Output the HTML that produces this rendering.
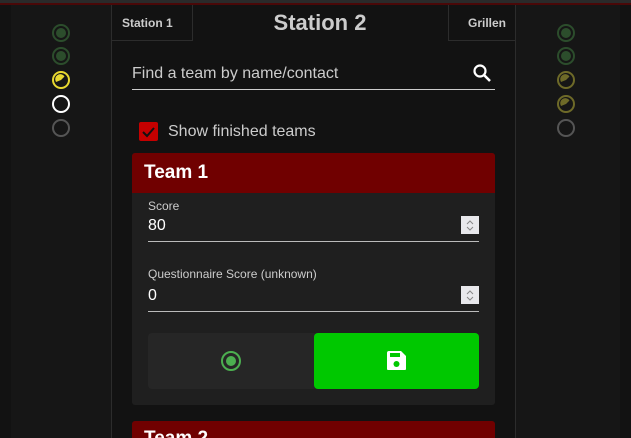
<!DOCTYPE html>
<html style="width:631px;height:438px;overflow:hidden"><head><style>
*{margin:0;padding:0;box-sizing:border-box}
body{width:631px;height:438px;overflow:hidden;background:#121212;font-family:"Liberation Sans",Roboto,sans-serif;position:relative;color:#ddd}
.a{position:absolute}
.side{background:#161616;top:0;height:438px}
svg{position:absolute}
</style></head><body>
<div class="a side" style="left:11px;width:100px"></div>
<div class="a side" style="left:516px;width:104px"></div>
<div class="a" style="left:111px;top:0;width:1px;height:438px;background:#2c2c2c"></div>
<div class="a" style="left:515px;top:0;width:1px;height:438px;background:#2c2c2c"></div>
<div class="a" style="left:0;top:0;width:631px;height:3px;background:#2a2a2a"></div>
<div class="a" style="left:0;top:3px;width:631px;height:2px;background:#4a0808"></div>

<svg style="left:50px;top:22px" width="24" height="120" viewBox="0 0 24 120">
<circle cx="11" cy="11" r="8" fill="none" stroke="#2c4d2c" stroke-width="2"/><circle cx="11" cy="11" r="5" fill="#2c4d2c"/>
<circle cx="11" cy="34" r="8" fill="none" stroke="#2c4d2c" stroke-width="2"/><circle cx="11" cy="34" r="5" fill="#2c4d2c"/>
<circle cx="11" cy="58" r="8" fill="none" stroke="#e8d830" stroke-width="2"/><path d="M11 58 L6 60 A5 5 0 0 1 14.5 54.5 Z" fill="#e8d830"/>
<circle cx="11" cy="82" r="8" fill="none" stroke="#fff" stroke-width="2"/>
<circle cx="11" cy="106" r="8" fill="none" stroke="#555" stroke-width="2"/>
</svg>
<svg style="left:555px;top:22px" width="24" height="120" viewBox="0 0 24 120">
<circle cx="11" cy="11" r="8" fill="none" stroke="#2c4d2c" stroke-width="2"/><circle cx="11" cy="11" r="5" fill="#2c4d2c"/>
<circle cx="11" cy="34" r="8" fill="none" stroke="#2c4d2c" stroke-width="2"/><circle cx="11" cy="34" r="5" fill="#2c4d2c"/>
<circle cx="11" cy="58" r="8" fill="none" stroke="#6e6a28" stroke-width="2"/><path d="M11 58 L6 60 A5 5 0 0 1 14.5 54.5 Z" fill="#6e6a28"/>
<circle cx="11" cy="82" r="8" fill="none" stroke="#6e6a28" stroke-width="2"/><path d="M11 82 L6 84 A5 5 0 0 1 14.5 78.5 Z" fill="#6e6a28"/>
<circle cx="11" cy="106" r="8" fill="none" stroke="#555" stroke-width="2"/>
</svg>

<div class="a" style="left:111px;top:5px;width:82px;height:36px;border:1px solid #2c2c2c;border-top:none;font-weight:bold;font-size:12px;color:#ccc;line-height:36px;padding-left:10px">Station 1</div>
<div class="a" style="left:448px;top:5px;width:68px;height:36px;border:1px solid #2c2c2c;border-top:none;font-weight:bold;font-size:12px;color:#ccc;line-height:36px;text-align:right;padding-right:9px">Grillen</div>
<div class="a" style="left:200px;top:10px;width:240px;text-align:center;font-weight:bold;font-size:22px;color:#ccc">Station 2</div>

<div class="a" style="left:132px;top:65px;font-size:16px;color:#ccc">Find a team by name/contact</div>
<svg style="left:472px;top:63px" width="20" height="20" viewBox="0 0 20 20"><circle cx="8" cy="8" r="5.5" fill="none" stroke="#fff" stroke-width="2.2"/><path d="M12 12 L18 18" stroke="#fff" stroke-width="2.6"/></svg>
<div class="a" style="left:132px;top:89px;width:363px;height:1px;background:#ccc"></div>

<div class="a" style="left:139px;top:122px;width:19px;height:19px;background:#c40000;border-radius:2px"></div>
<svg style="left:139px;top:122px" width="19" height="19"><path d="M4 10 L8 14 L15 6" stroke="#111" stroke-width="2" fill="none"/></svg>
<div class="a" style="left:168px;top:123px;font-size:16px;color:#ccc">Show finished teams</div>

<div class="a" style="left:132px;top:153px;width:363px;height:252px;background:#1f1f1f;border-radius:3px;overflow:hidden">
<div style="height:40px;background:#700000;color:#fff;font-weight:bold;font-size:19px;line-height:40px;padding-left:12px">Team 1</div>
</div>
<div class="a" style="left:148px;top:199px;font-size:12px;color:#ccc">Score</div>
<div class="a" style="left:148px;top:217px;font-size:16px;color:#fff">80</div>
<div class="a" style="left:148px;top:241px;width:331px;height:1px;background:#bbb"></div>
<div class="a" style="left:148px;top:267px;font-size:12px;color:#ccc">Questionnaire Score (unknown)</div>
<div class="a" style="left:148px;top:287px;font-size:16px;color:#fff">0</div>
<div class="a" style="left:148px;top:311px;width:331px;height:1px;background:#bbb"></div>
<svg style="left:461px;top:216px" width="18" height="18"><rect width="18" height="18" fill="#e8e8ec"/><path d="M6 8 L9 5 L12 8 M6 11 L9 14 L12 11" stroke="#888" fill="none"/></svg>
<svg style="left:461px;top:286px" width="18" height="18"><rect width="18" height="18" fill="#e8e8ec"/><path d="M6 8 L9 5 L12 8 M6 11 L9 14 L12 11" stroke="#888" fill="none"/></svg>

<div class="a" style="left:148px;top:333px;width:170px;height:56px;background:#262626;border-radius:4px"></div>
<div class="a" style="left:314px;top:333px;width:165px;height:56px;background:#00c800;border-radius:4px"></div>
<svg style="left:220px;top:350px" width="22" height="22"><circle cx="11" cy="11" r="9" fill="none" stroke="#4caf50" stroke-width="2"/><circle cx="11" cy="11" r="5" fill="#4caf50"/></svg>
<svg style="left:387px;top:351px" width="20" height="20"><path d="M0 2 Q0 0 2 0 L14 0 L19 5 L19 18 Q19 19 18 19 L1 19 Q0 19 0 18 Z" fill="#fff"/><rect x="3" y="2" width="10" height="4" fill="#00c800"/><circle cx="9.5" cy="13" r="3" fill="#00c800"/></svg>

<div class="a" style="left:132px;top:421px;width:363px;height:17px;background:#700000;border-radius:3px 3px 0 0;overflow:hidden;color:#fff;font-weight:bold;font-size:19px;line-height:36px;padding-left:12px">Team 2</div>
</body></html>
